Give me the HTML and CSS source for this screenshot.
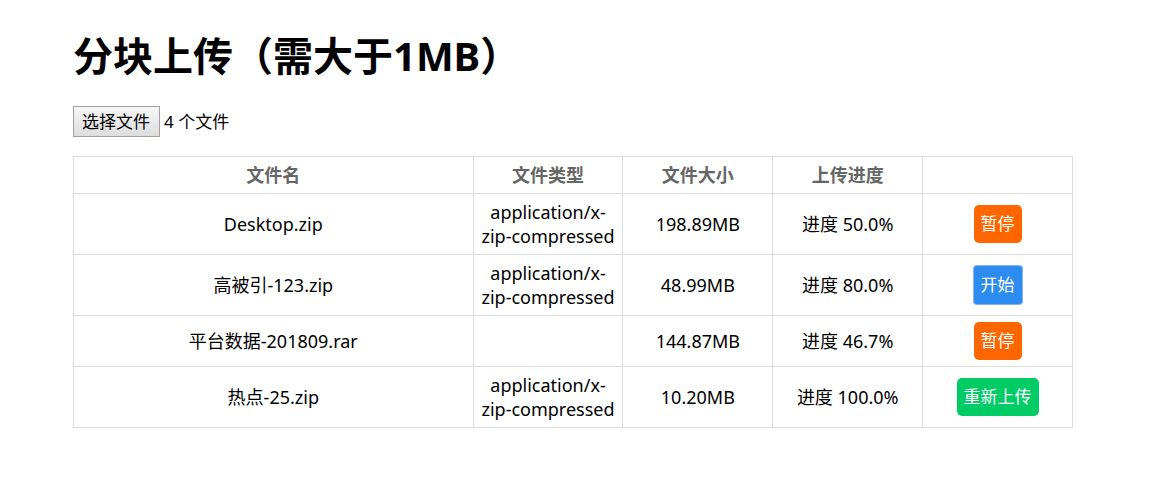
FILE: index.html
```html
<!DOCTYPE html>
<html lang="zh-CN">
<head>
<meta charset="utf-8">
<title>分块上传</title>
<link rel="stylesheet" href="styles.css">
</head>
<body>
<main class="page">
  <h1 class="title">分块上传（需大于1MB）</h1>
  <div class="picker">
    <input type="file" id="files" class="picker-input" multiple>
    <label for="files" class="picker-button">选择文件</label>
    <span class="picker-status">4 个文件</span>
  </div>
  <table class="files">
    <colgroup><col class="col-name"><col class="col"><col class="col"><col class="col"><col class="col"></colgroup>
    <thead>
      <tr><th>文件名</th><th>文件类型</th><th>文件大小</th><th>上传进度</th><th></th></tr>
    </thead>
    <tbody>
      <tr><td>Desktop.zip</td><td>application/x-zip-compressed</td><td>198.89MB</td><td>进度 50.0%</td><td><button type="button" class="btn btn-pause">暂停</button></td></tr>
      <tr><td>高被引-123.zip</td><td>application/x-zip-compressed</td><td>48.99MB</td><td>进度 80.0%</td><td><button type="button" class="btn btn-start">开始</button></td></tr>
      <tr><td>平台数据-201809.rar</td><td></td><td>144.87MB</td><td>进度 46.7%</td><td><button type="button" class="btn btn-pause">暂停</button></td></tr>
      <tr><td>热点-25.zip</td><td>application/x-zip-compressed</td><td>10.20MB</td><td>进度 100.0%</td><td><button type="button" class="btn btn-again">重新上传</button></td></tr>
    </tbody>
  </table>
</main>
</body>
</html>
```
FILE: styles.css
```css
* { box-sizing: border-box; }
body {
  margin: 0;
  padding-right: 7px;
  background: #fff;
  color: #000;
  font-family: "Noto Sans", "Noto Sans CJK SC", sans-serif;
  font-size: 18px;
  line-height: 24px;
}
.page {
  max-width: 1000px;
  margin: 0 auto;
  padding: 28px 0;
}
.title {
  margin: 0 0 22px;
  font-size: 40px;
  line-height: 56px;
  font-weight: 700;
}
.picker {
  position: relative;
  display: flex;
  align-items: center;
  gap: 4px;
  margin-bottom: 19px;
  font-size: 17px;
}
.picker-input {
  position: absolute;
  width: 87px;
  height: 31px;
  opacity: 0;
}
.picker-button {
  padding: 3px 9px 2px 8px;
  border: 1px solid #a0a0a0;
  background: linear-gradient(#f6f6f6, #dddddd);
}
.files {
  width: 100%;
  table-layout: fixed;
  border-collapse: collapse;
  text-align: center;
}
.col-name { width: 40%; }
.col { width: 15%; }
.files th, .files td {
  padding: 6px;
  border: 1px solid #ddd;
}
.files th { color: #666; font-weight: 700; }
.btn {
  display: block;
  margin: 0 auto;
  height: 38px;
  padding: 0 7px;
  border: 0;
  border-radius: 5px;
  color: #fff;
  font: inherit;
  font-size: 17px;
}
.btn-pause { background: #ff6600; }
.btn-start { background: #2d8cf0; border-radius: 3px; box-shadow: 0 0 0 1px #85b3f8; }
.btn-again { background: #00cc66; }
```
